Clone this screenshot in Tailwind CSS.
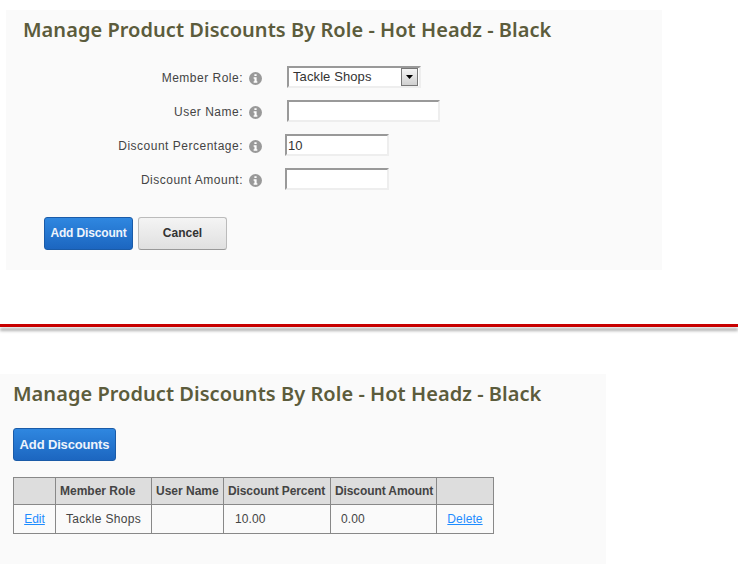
<!DOCTYPE html>
<html lang="en">
  <head>
    <meta charset="UTF-8" />
    <title>Manage Product Discounts</title>
    <script src="https://cdn.jsdelivr.net/npm/@tailwindcss/browser@4"></script>
  </head>
  <body class="bg-white font-['Liberation_Sans',Arial,sans-serif] text-[12px] text-[#444] h-[564px] overflow-hidden">
    <!-- add discount form -->
    <div class="ml-[6px] mt-[10px] w-[656px] h-[260px] bg-[#fafafa] pt-[6px]">
      <h2 class="ml-[17px] h-[28px] leading-[28px] font-['Noto_Sans',sans-serif] font-semibold text-[20px] tracking-[0.04px] text-[#5c5c3c] whitespace-nowrap">Manage Product Discounts By Role - Hot Headz - Black</h2>

      <div class="mt-[16px] flex flex-col">
        <div class="flex items-center h-[34px]">
          <label class="w-[237px] mt-[2px] text-right tracking-[0.5px]">Member Role:</label>
          <svg class="ml-[6px] mt-[2px] w-[13px] h-[13px]" viewBox="0 0 14 14"><circle cx="7" cy="7" r="7" fill="#999"/><path d="M5.8 2.4h2.4v2H5.8zM5 5.6h3.2v4.4H9v1.6H5V10h.9V7.2H5z" fill="#fff"/></svg>
          <div class="ml-[25px] w-[134px] h-[22px] flex items-center justify-between border-2 border-t-[#999] border-l-[#999] border-r-[#eee] border-b-[#eee] bg-white pl-[4px] pr-[1px] text-[13px] text-[#333] tracking-[0.1px]">
            <span>Tackle Shops</span>
            <span class="w-[17px] h-[18px] flex items-center justify-center border border-[#777] bg-gradient-to-b from-[#f4f4f4] to-[#d0d0d0]">
              <svg class="w-[7px] h-[4px]" viewBox="0 0 7 4"><path d="M0 0h7L3.5 4z" fill="#000"/></svg>
            </span>
          </div>
        </div>
        <div class="flex items-center h-[34px]">
          <label class="w-[237px] mt-[2px] text-right tracking-[0.5px]">User Name:</label>
          <svg class="ml-[6px] mt-[2px] w-[13px] h-[13px]" viewBox="0 0 14 14"><circle cx="7" cy="7" r="7" fill="#999"/><path d="M5.8 2.4h2.4v2H5.8zM5 5.6h3.2v4.4H9v1.6H5V10h.9V7.2H5z" fill="#fff"/></svg>
          <input type="text" class="ml-[25px] w-[153px] h-[22px] border-2 border-t-[#999] border-l-[#999] border-r-[#eee] border-b-[#eee] bg-white" />
        </div>
        <div class="flex items-center h-[34px]">
          <label class="w-[237px] mt-[2px] text-right tracking-[0.5px]">Discount Percentage:</label>
          <svg class="ml-[6px] mt-[2px] w-[13px] h-[13px]" viewBox="0 0 14 14"><circle cx="7" cy="7" r="7" fill="#999"/><path d="M5.8 2.4h2.4v2H5.8zM5 5.6h3.2v4.4H9v1.6H5V10h.9V7.2H5z" fill="#fff"/></svg>
          <input type="text" value="10" class="ml-[23px] w-[104px] h-[22px] border-2 border-t-[#999] border-l-[#999] border-r-[#eee] border-b-[#eee] bg-white px-[1px] text-[13px] text-[#333]" />
        </div>
        <div class="flex items-center h-[34px]">
          <label class="w-[237px] mt-[2px] text-right tracking-[0.5px]">Discount Amount:</label>
          <svg class="ml-[6px] mt-[2px] w-[13px] h-[13px]" viewBox="0 0 14 14"><circle cx="7" cy="7" r="7" fill="#999"/><path d="M5.8 2.4h2.4v2H5.8zM5 5.6h3.2v4.4H9v1.6H5V10h.9V7.2H5z" fill="#fff"/></svg>
          <input type="text" class="ml-[23px] w-[104px] h-[22px] border-2 border-t-[#999] border-l-[#999] border-r-[#eee] border-b-[#eee] bg-white" />
        </div>
      </div>

      <div class="mt-[21px] ml-[38px] flex gap-[5px]">
        <button class="w-[89px] h-[33px] pb-[2px] rounded-[3px] border border-[#1a5ba8] bg-gradient-to-b from-[#2f87e0] to-[#1c66c0] text-[#eef4fc] font-bold text-[12px] tracking-[-0.15px]">Add Discount</button>
        <button class="w-[89px] h-[33px] pb-[2px] rounded-[3px] border border-[#bbb] border-b-[#999] bg-gradient-to-b from-[#f4f4f4] to-[#e0e0e0] text-[#333] font-bold text-[12px]">Cancel</button>
      </div>
    </div>

    <!-- divider -->
    <div class="mt-[54px] h-[3px] bg-[#c80000] shadow-[0_4px_3px_#b0b0b0]"></div>

    <!-- discount list -->
    <div class="mt-[47px] w-[606px] h-[190px] bg-[#fafafa] pt-[6px] pl-[13px]">
      <h2 class="h-[28px] leading-[28px] font-['Noto_Sans',sans-serif] font-semibold text-[20px] tracking-[0.04px] text-[#5c5c3c] whitespace-nowrap">Manage Product Discounts By Role - Hot Headz - Black</h2>

      <button class="mt-[20px] block w-[103px] h-[33px] rounded-[3px] border border-[#1a5ba8] bg-gradient-to-b from-[#2f87e0] to-[#1c66c0] text-[#eef4fc] font-bold text-[13px] tracking-[-0.15px]">Add Discounts</button>

      <table class="mt-[16px] border-collapse w-[480px] table-fixed">
        <thead>
          <tr class="h-[27px] bg-[#ddd] text-left">
            <th class="w-[42px] border border-[#888]"></th>
            <th class="w-[96px] border border-[#888] pl-[4px]">Member Role</th>
            <th class="w-[72px] border border-[#888] pl-[4px]">User Name</th>
            <th class="w-[107px] border border-[#888] pl-[4px] tracking-[-0.1px]">Discount Percent</th>
            <th class="w-[106px] border border-[#888] pl-[4px] tracking-[-0.1px]">Discount Amount</th>
            <th class="w-[57px] border border-[#888]"></th>
          </tr>
        </thead>
        <tbody>
          <tr class="h-[29px]">
            <td class="border border-[#888] text-center"><a href="#" class="text-[#1e8cff] underline">Edit</a></td>
            <td class="border border-[#888] pl-[10px] tracking-[0.3px]">Tackle Shops</td>
            <td class="border border-[#888]"></td>
            <td class="border border-[#888] pl-[11px] tracking-[0.1px]">10.00</td>
            <td class="border border-[#888] pl-[10px] tracking-[0.1px]">0.00</td>
            <td class="border border-[#888] text-center"><a href="#" class="text-[#1e8cff] underline tracking-[0.1px]">Delete</a></td>
          </tr>
        </tbody>
      </table>
    </div>
  </body>
</html>
